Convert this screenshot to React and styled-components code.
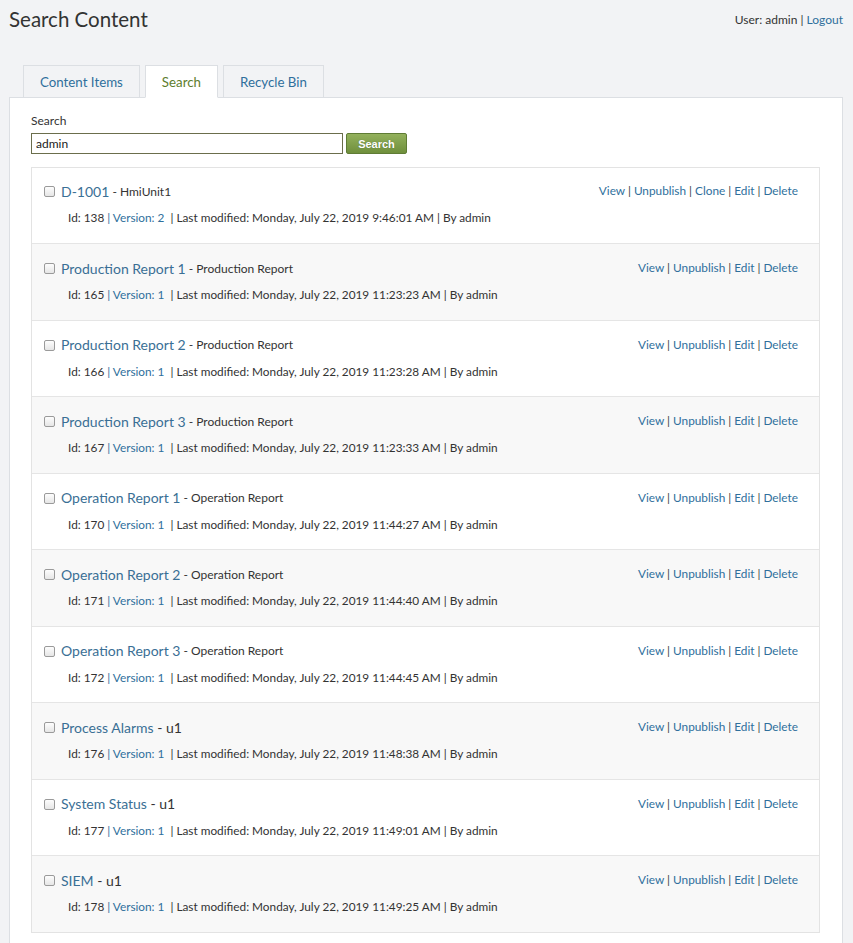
import React from "react";
import styled, { createGlobalStyle } from "styled-components";

const GlobalStyle = createGlobalStyle`
  html, body {
    margin: 0;
    padding: 0;
    background: #f2f3f5;
    font-family: Lato, "Open Sans", "Liberation Sans", sans-serif;
    color: #333;
  }
`;

const Page = styled.div`
  padding: 0 10px 0 9px;
`;

const Header = styled.header`
  display: flex;
  justify-content: space-between;
  align-items: flex-start;
  height: 65px;
`;

const Title = styled.h1`
  margin: 6px 0 0;
  font-size: 20.5px;
  line-height: 26px;
  font-weight: 400;
  color: #333;
`;

const UserBox = styled.div`
  margin-top: 11px;
  font-size: 12px;
  line-height: 18px;
  color: #333;
`;

const Link = styled.a`
  color: #2f6f9c;
  text-decoration: none;
  cursor: pointer;
`;

const Tabs = styled.nav`
  display: flex;
  gap: 5px;
  padding-left: 14px;
  position: relative;
  z-index: 1;
  margin-bottom: -1px;
`;

const Tab = styled.div`
  height: 31px;
  padding: 0 16px;
  display: flex;
  align-items: center;
  font-size: 13.3px;
  border: 1px solid #dcdfe3;
  border-bottom: ${(p) => (p.$active ? "1px solid #fff" : "1px solid #dcdfe3")};
  background: ${(p) => (p.$active ? "#fff" : "#f2f3f5")};
  color: ${(p) => (p.$active ? "#5e7d2d" : "#2f6f9c")};
`;

const Panel = styled.section`
  background: #fff;
  border: 1px solid #dcdfe3;
  border-bottom: none;
  padding: 15px 22px 12px 21px;
  min-height: 820px;
`;

const Label = styled.div`
  font-size: 12px;
  line-height: 16px;
  margin-bottom: 3px;
`;

const SearchRow = styled.div`
  display: flex;
  align-items: center;
  gap: 3px;
  margin-bottom: 13px;
`;

const Input = styled.input`
  box-sizing: border-box;
  width: 312px;
  height: 21px;
  border: 1px solid #6b6e4c;
  padding: 0 4px;
  font-family: Lato, "Open Sans", sans-serif;
  font-size: 12px;
  color: #222;
  outline: none;
`;

const Button = styled.button`
  box-sizing: border-box;
  width: 61px;
  height: 21px;
  margin-top: 1px;
  border: 1px solid #5f7c35;
  border-radius: 2px;
  background: linear-gradient(#93b15c, #6f8f3c);
  color: #fff;
  font-family: "Liberation Sans", Arial, sans-serif;
  font-weight: 700;
  font-size: 11px;
  text-shadow: 0 0 1px rgba(0, 0, 0, 0.3);
  padding: 0;
`;

const List = styled.div`
  border: 1px solid #e3e3e3;
`;

const Row = styled.div`
  display: flex;
  justify-content: space-between;
  align-items: flex-start;
  height: ${(p) => (p.$first ? "75px" : "76.5px")};
  box-sizing: border-box;
  padding: ${(p) => (p.$first ? "12px" : "13px")} 21px 0 12px;
  background: ${(p) => (p.$odd ? "#f8f8f8" : "#fff")};
  border-top: ${(p) => (p.$first ? "none" : "1px solid #e5e5e5")};
`;

const Main = styled.div`
  display: flex;
  flex-direction: column;
`;

const TitleLine = styled.div`
  display: flex;
  align-items: center;
  height: 22px;
`;

const Check = styled.span`
  width: 11px;
  height: 11px;
  box-sizing: border-box;
  border: 1px solid #9a9a9a;
  border-radius: 2px;
  background: linear-gradient(#fdfdfd, #e6e6e6);
  margin-right: 6px;
  margin-top: 1px;
`;

const ItemName = styled(Link)`
  font-size: 14px;
  color: #3a6f95;
`;

const ItemType = styled.span`
  font-size: ${(p) => (p.$big ? "14px" : "12px")};
  color: #333;
  white-space: pre;
`;

const Meta = styled.div`
  margin-top: 7px;
  padding-left: 24px;
  font-size: 11.8px;
  line-height: 18px;
  color: #333;
  white-space: pre;
`;

const Actions = styled.div`
  font-size: 11.8px;
  line-height: 22px;
  color: #444;
  white-space: pre;
`;

const items = [
  { name: "D-1001", type: "HmiUnit1", id: 138, ver: 2, time: "9:46:01 AM", clone: true },
  { name: "Production Report 1", type: "Production Report", id: 165, ver: 1, time: "11:23:23 AM" },
  { name: "Production Report 2", type: "Production Report", id: 166, ver: 1, time: "11:23:28 AM" },
  { name: "Production Report 3", type: "Production Report", id: 167, ver: 1, time: "11:23:33 AM" },
  { name: "Operation Report 1", type: "Operation Report", id: 170, ver: 1, time: "11:44:27 AM" },
  { name: "Operation Report 2", type: "Operation Report", id: 171, ver: 1, time: "11:44:40 AM" },
  { name: "Operation Report 3", type: "Operation Report", id: 172, ver: 1, time: "11:44:45 AM" },
  { name: "Process Alarms", type: "u1", id: 176, ver: 1, time: "11:48:38 AM", big: true },
  { name: "System Status", type: "u1", id: 177, ver: 1, time: "11:49:01 AM", big: true },
  { name: "SIEM", type: "u1", id: 178, ver: 1, time: "11:49:25 AM", big: true },
];

function ItemRow({ item, index }) {
  const actions = ["View", "Unpublish", ...(item.clone ? ["Clone"] : []), "Edit", "Delete"];
  return (
    <Row $odd={index % 2 === 1} $first={index === 0}>
      <Main>
        <TitleLine>
          <Check />
          <ItemName>{item.name}</ItemName>
          <ItemType $big={item.big}>{" - " + item.type}</ItemType>
        </TitleLine>
        <Meta>
          {"Id: " + item.id + " "}
          <Link>{"| Version: " + item.ver + " "}</Link>
          {" | Last modified: Monday, July 22, 2019 " + item.time + " | By admin"}
        </Meta>
      </Main>
      <Actions>
        {actions.map((a, i) => (
          <React.Fragment key={a}>
            {i > 0 && " | "}
            <Link>{a}</Link>
          </React.Fragment>
        ))}
      </Actions>
    </Row>
  );
}

export default function App() {
  return (
    <Page>
      <GlobalStyle />
      <Header>
        <Title>Search Content</Title>
        <UserBox>
          User: admin | <Link>Logout</Link>
        </UserBox>
      </Header>
      <Tabs>
        <Tab>Content Items</Tab>
        <Tab $active>Search</Tab>
        <Tab>Recycle Bin</Tab>
      </Tabs>
      <Panel>
        <Label>Search</Label>
        <SearchRow>
          <Input defaultValue="admin" />
          <Button>Search</Button>
        </SearchRow>
        <List>
          {items.map((item, i) => (
            <ItemRow key={item.id} item={item} index={i} />
          ))}
        </List>
      </Panel>
    </Page>
  );
}
